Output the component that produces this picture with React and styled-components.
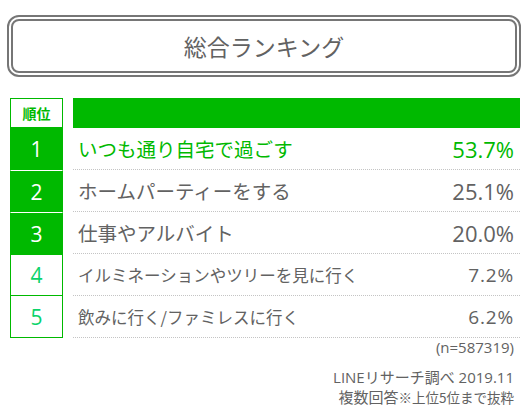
import React from "react";
import styled, { createGlobalStyle } from "styled-components";

const GREEN = "#00b900";
const GRAY = "#626262";

const Global = createGlobalStyle`
  html, body { margin: 0; padding: 0; background: #fff; }
  body {
    width: 530px;
    font-family: "Open Sans", "Noto Sans CJK JP", sans-serif;
    color: ${GRAY};
  }
`;

const Page = styled.div`
  padding: 15px 10px 0 10px;
`;

const TitleBox = styled.div`
  margin: 0 -1px 0 -3px;
  height: 62px;
  box-sizing: border-box;
  border: 6px double #767676;
  border-radius: 12px;
  display: flex;
  align-items: center;
  justify-content: center;
  font-family: "Noto Sans CJK JP", sans-serif;
  font-size: 23px;
  color: ${GRAY};
`;

const Table = styled.div`
  margin-top: 21px;
  display: grid;
  grid-template-columns: 53px 1fr;
  column-gap: 10px;
`;

const HeadRank = styled.div`
  height: 30px;
  box-sizing: border-box;
  border: 1px solid ${GREEN};
  background: #fff;
  color: ${GREEN};
  font-family: "Noto Sans CJK JP", sans-serif;
  font-weight: 700;
  font-size: 14px;
  display: flex;
  align-items: center;
  justify-content: center;
`;

const HeadBar = styled.div`
  height: 30px;
  background: ${GREEN};
`;

const RankCell = styled.div`
  height: 42px;
  box-sizing: border-box;
  display: flex;
  align-items: center;
  justify-content: center;
  font-family: "Open Sans", sans-serif;
  font-size: 21px;
  font-weight: 500;
  background: ${(p) => (p.$top ? GREEN : "#fff")};
  color: ${(p) => (p.$top ? "#fff" : "#0bd36a")};
  border-left: 1px solid ${GREEN};
  border-right: 1px solid ${GREEN};
  border-bottom: ${(p) => (p.$top ? "none" : `1px solid ${GREEN}`)};
  border-top: ${(p) => (p.$sep ? "1px solid #fff" : "none")};
  ${(p) => (p.$first ? `border-top: 1px solid ${GREEN};` : "")}
`;

const Content = styled.div`
  height: 42px;
  box-sizing: border-box;
  border-bottom: 1px dotted #c4c4c4;
  display: flex;
  align-items: center;
  justify-content: space-between;
  padding: 0 6px 0 5px;
  color: ${(p) => (p.$first ? GREEN : GRAY)};
`;

const Label = styled.span`
  font-family: "Noto Sans CJK JP", sans-serif;
  font-size: ${(p) => (p.$small ? "16.5px" : "19.5px")};
  white-space: nowrap;
`;

const Pct = styled.span`
  font-family: "Open Sans", sans-serif;
  font-size: ${(p) => (p.$small ? "19px" : "22px")};
  font-weight: 500;
  letter-spacing: ${(p) => (p.$small ? "0.8px" : "0px")};
`;

const Notes = styled.div`
  display: flex;
  flex-direction: column;
  align-items: flex-end;
  padding-right: 6px;
  color: ${GRAY};
`;

const Sample = styled.div`
  font-family: "Open Sans", "Noto Sans CJK JP", sans-serif;
  font-size: 15px;
  margin-top: 0;
  line-height: 18px;
`;

const Source = styled.div`
  font-family: "Open Sans", "Noto Sans CJK JP", sans-serif;
  font-size: 15px;
  margin-top: 12px;
  line-height: 19px;
`;

const Multi = styled.div`
  font-family: "Noto Sans CJK JP", sans-serif;
  font-size: 15px;
  line-height: 19px;
`;

const Small = styled.span`
  font-size: 13.5px;
`;

const rows = [
  { label: "いつも通り自宅で過ごす", pct: "53.7%" },
  { label: "ホームパーティーをする", pct: "25.1%" },
  { label: "仕事やアルバイト", pct: "20.0%" },
  { label: "イルミネーションやツリーを見に行く", pct: "7.2%" },
  { label: "飲みに行く/ファミレスに行く", pct: "6.2%" },
];

export default function App() {
  return (
    <>
      <Global />
      <Page>
        <TitleBox>総合ランキング</TitleBox>
        <Table>
          <HeadRank>順位</HeadRank>
          <HeadBar />
          {rows.map((r, i) => {
            const top = i < 3;
            const small = i >= 3;
            return (
              <React.Fragment key={i}>
                <RankCell $top={top} $sep={i === 1 || i === 2} $first={i === 3}>
                  {i + 1}
                </RankCell>
                <Content $first={i === 0}>
                  <Label $small={small}>{r.label}</Label>
                  <Pct $small={small}>{r.pct}</Pct>
                </Content>
              </React.Fragment>
            );
          })}
        </Table>
        <Notes>
          <Sample>(n=587319)</Sample>
          <Source>LINEリサーチ調べ 2019.11</Source>
          <Multi>
            複数回答<Small>※上位5位まで抜粋</Small>
          </Multi>
        </Notes>
      </Page>
    </>
  );
}
